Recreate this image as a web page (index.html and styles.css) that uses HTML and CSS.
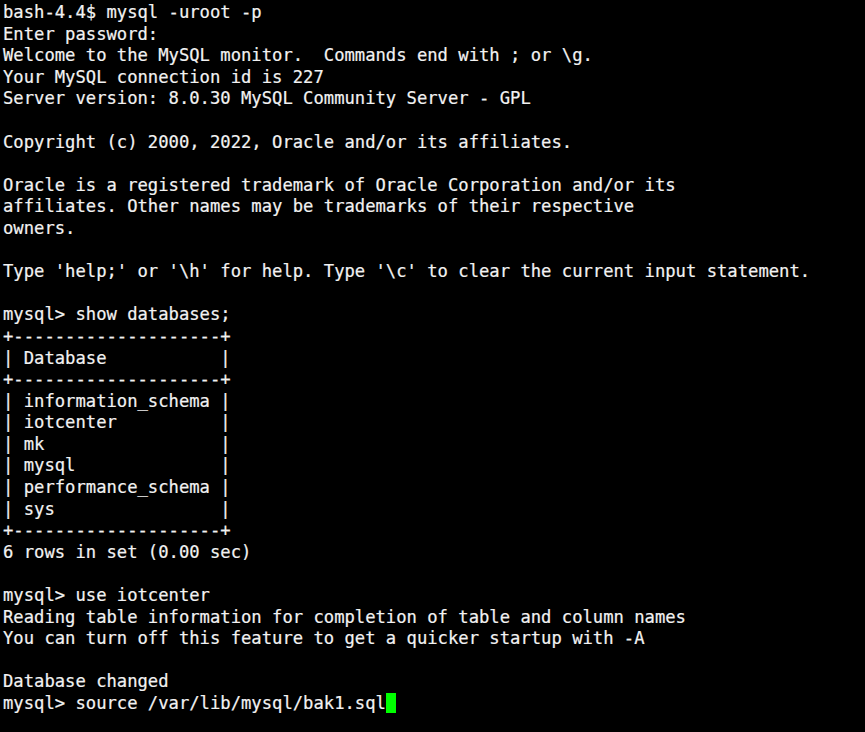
FILE: index.html
```html
<!DOCTYPE html>
<html>
<head>
<meta charset="utf-8">
<link rel="stylesheet" href="styles.css">
</head>
<body>
<pre class="term">bash-4.4$ mysql -uroot -p
Enter password:
Welcome to the MySQL monitor.  Commands end with ; or \g.
Your MySQL connection id is 227
Server version: 8.0.30 MySQL Community Server - GPL

Copyright (c) 2000, 2022, Oracle and/or its affiliates.

Oracle is a registered trademark of Oracle Corporation and/or its
affiliates. Other names may be trademarks of their respective
owners.

Type 'help;' or '\h' for help. Type '\c' to clear the current input statement.

mysql> show databases;
+--------------------+
| Database           |
+--------------------+
| information_schema |
| iotcenter          |
| mk                 |
| mysql              |
| performance_schema |
| sys                |
+--------------------+
6 rows in set (0.00 sec)

mysql> use iotcenter
Reading table information for completion of table and column names
You can turn off this feature to get a quicker startup with -A

Database changed
mysql> source /var/lib/mysql/bak1.sql<span class="cursor"> </span></pre>
</body>
</html>
```

FILE: styles.css
```css
html, body {
  margin: 0;
  padding: 0;
  background: #000;
  height: 100%;
}
.term {
  margin: 0;
  padding: 2px 0 0 3px;
  color: #f2f2f2;
  font-family: "DejaVu Sans Mono", monospace;
  font-size: 17.2px;
  line-height: 21.6px;
  white-space: pre;
  -webkit-text-stroke: 0.2px #f2f2f2;
}
.cursor {
  background: #00ff00;
}
```
